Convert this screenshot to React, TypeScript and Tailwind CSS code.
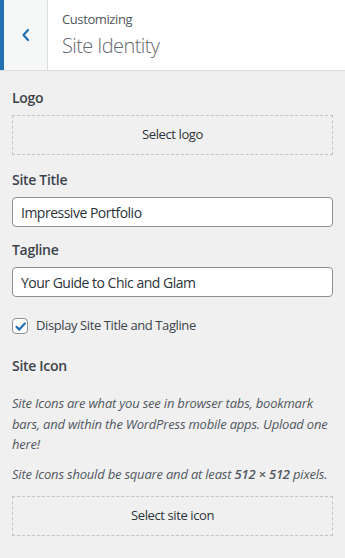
import React from "react";

const font = { fontFamily: '"Open Sans", "Noto Sans", sans-serif' };

const Label = ({ children }: { children: React.ReactNode }) => (
  <div className="text-[14px] leading-[24px] font-semibold text-[#3c434a] tracking-[-0.3px]">{children}</div>
);

const DashedButton = ({ children }: { children: React.ReactNode }) => (
  <div className="h-[40px] border border-dashed border-[#c3c4c7] flex items-center justify-center text-[13px] text-[#2c3338]">
    {children}
  </div>
);

const TextInput = ({ value }: { value: string }) => (
  <div className="h-[30px] bg-white border border-[#8c8f94] rounded-[4px] flex items-center px-2 text-[14px] text-[#2c3338] tracking-[-0.5px]">
    {value}
  </div>
);

export default function App() {
  return (
    <div className="w-[345px] h-[558px] bg-[#f0f0f1] overflow-hidden tracking-[-0.4px]" style={font}>
      <header className="h-[71px] bg-white border-b border-[#dcdcde] flex">
        <div className="w-[4px] bg-[#2271b1]" />
        <div className="w-[44px] bg-[#f6f7f7] border-r border-[#dcdcde] flex items-center justify-center">
          <svg width="12" height="14" viewBox="0 0 12 14" fill="none">
            <path d="M8 2 L3.5 7 L8 12" stroke="#2271b1" strokeWidth="2.2" strokeLinecap="round" strokeLinejoin="round" />
          </svg>
        </div>
        <div className="pl-[14px] pt-[9px]">
          <div className="text-[13px] leading-[20px] text-[#50575e]">Customizing</div>
          <div className="text-[20px] leading-[30px] font-light text-[#646970] mt-[2px] tracking-[-0.6px]">Site Identity</div>
        </div>
      </header>

      <div className="px-3 pt-[15px]">
        <Label>Logo</Label>
        <div className="mt-[5px]">
          <DashedButton>Select logo</DashedButton>
        </div>

        <div className="mt-[13px]">
          <Label>Site Title</Label>
        </div>
        <div className="mt-[5px]">
          <TextInput value="Impressive Portfolio" />
        </div>

        <div className="mt-[11px]">
          <Label>Tagline</Label>
        </div>
        <div className="mt-[5px]">
          <TextInput value="Your Guide to Chic and Glam" />
        </div>

        <div className="mt-[21px] flex items-center gap-2 h-[16px]">
          <div className="w-[16px] h-[16px] bg-white border border-[#8c8f94] rounded-[4px] flex items-center justify-center">
            <svg width="13" height="13" viewBox="0 0 13 13" fill="none">
              <path d="M2.5 6.8 L5.3 9.6 L10.8 3.4" stroke="#2271b1" strokeWidth="2.2" strokeLinecap="round" strokeLinejoin="round" />
            </svg>
          </div>
          <span className="text-[13px] text-[#3c434a]">Display Site Title and Tagline</span>
        </div>

        <div className="mt-[20px]">
          <Label>Site Icon</Label>
        </div>
        <p className="mt-[15px] text-[13px] leading-[20.5px] italic text-[#50575e] tracking-[-0.2px]">
          Site Icons are what you see in browser tabs, bookmark bars, and within the WordPress mobile apps. Upload one here!
        </p>
        <p className="mt-[9px] text-[13px] leading-[20.5px] italic text-[#50575e] tracking-[-0.2px]">
          Site Icons should be square and at least <strong className="font-semibold">512 × 512</strong> pixels.
        </p>
        <div className="mt-[12px]">
          <DashedButton>Select site icon</DashedButton>
        </div>
      </div>
    </div>
  );
}
